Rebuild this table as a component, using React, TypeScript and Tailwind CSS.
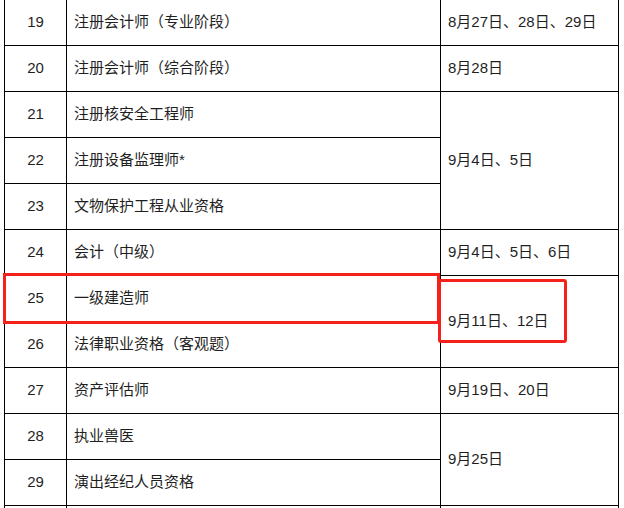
// Exam schedule table with highlighted rows
const cell = "border border-black pl-[7px] pr-2 text-left";
const numCell = "border border-black text-center";

export default function App() {
  return (
    <div className="relative w-[624px] h-[508px] overflow-hidden bg-white font-['Liberation_Sans','Noto_Sans_CJK_SC',sans-serif] text-[15px] text-[#1f1f1f]">
      <table className="ml-[4px] -mt-px border-collapse table-fixed w-[614px]">
        <colgroup>
          <col className="w-[62px]" />
          <col className="w-[374px]" />
          <col className="w-[178px]" />
        </colgroup>
        <tbody>
          <tr className="h-[46px]">
            <td className={numCell}>19</td>
            <td className={cell}>注册会计师（专业阶段）</td>
            <td className={cell}>8月27日、28日、29日</td>
          </tr>
          <tr className="h-[46px]">
            <td className={numCell}>20</td>
            <td className={cell}>注册会计师（综合阶段）</td>
            <td className={cell}>8月28日</td>
          </tr>
          <tr className="h-[46px]">
            <td className={numCell}>21</td>
            <td className={cell}>注册核安全工程师</td>
            <td className={cell} rowSpan={3}>9月4日、5日</td>
          </tr>
          <tr className="h-[46px]">
            <td className={numCell}>22</td>
            <td className={cell}>注册设备监理师*</td>
          </tr>
          <tr className="h-[46px]">
            <td className={numCell}>23</td>
            <td className={cell}>文物保护工程从业资格</td>
          </tr>
          <tr className="h-[46px]">
            <td className={numCell}>24</td>
            <td className={cell}>会计（中级）</td>
            <td className={cell}>9月4日、5日、6日</td>
          </tr>
          <tr className="h-[46px]">
            <td className={numCell}>25</td>
            <td className={cell}>一级建造师</td>
            <td className={cell} rowSpan={2}>9月11日、12日</td>
          </tr>
          <tr className="h-[46px]">
            <td className={numCell}>26</td>
            <td className={cell}>法律职业资格（客观题）</td>
          </tr>
          <tr className="h-[46px]">
            <td className={numCell}>27</td>
            <td className={cell}>资产评估师</td>
            <td className={cell}>9月19日、20日</td>
          </tr>
          <tr className="h-[46px]">
            <td className={numCell}>28</td>
            <td className={cell}>执业兽医</td>
            <td className={cell} rowSpan={2}>9月25日</td>
          </tr>
          <tr className="h-[46px]">
            <td className={numCell}>29</td>
            <td className={cell}>演出经纪人员资格</td>
          </tr>
          <tr className="h-[46px]">
            <td className={numCell}></td>
            <td className={cell}></td>
            <td className={cell}></td>
          </tr>
        </tbody>
      </table>
      {/* red highlight boxes */}
      <div className="absolute left-[3px] top-[273px] w-[437px] h-[51px] border-[3px] border-[#f5221b]" />
      <div className="absolute left-[438px] top-[279px] w-[129px] h-[64px] border-[3px] border-[#f5221b] rounded-[3px]" />
    </div>
  );
}
